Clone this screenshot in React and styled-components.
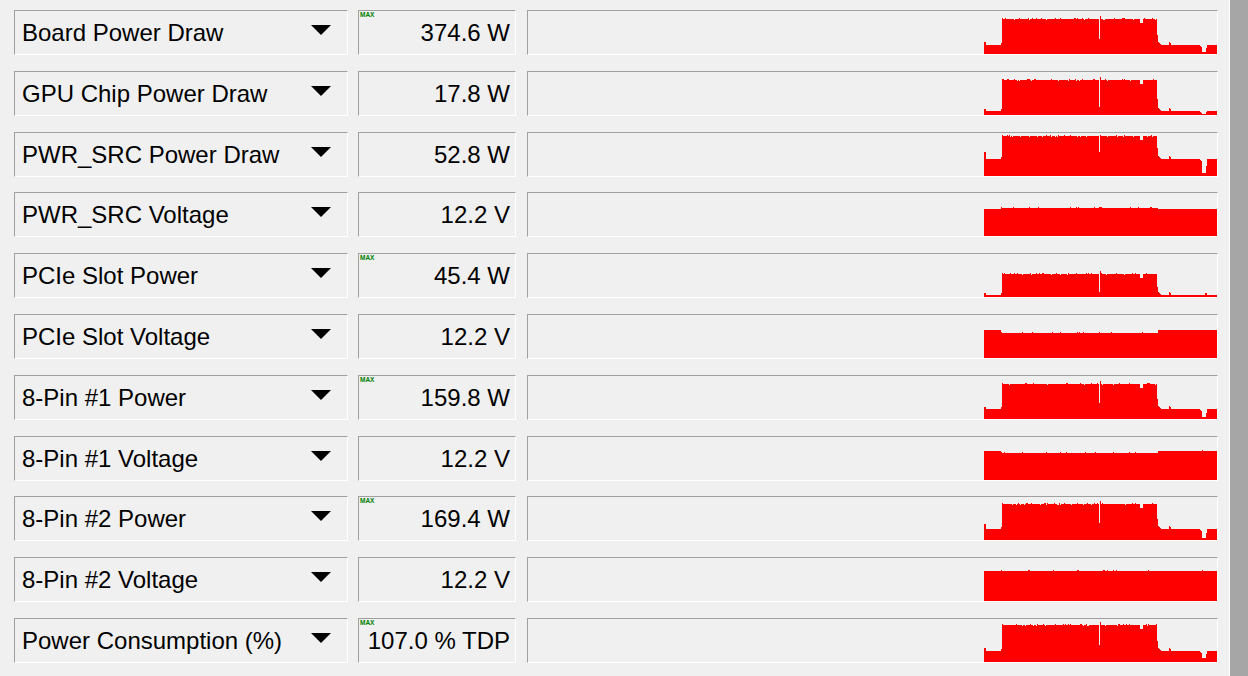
import React from "react"
import styled, { createGlobalStyle } from "styled-components"

const GlobalStyle = createGlobalStyle`
  html, body {
    margin: 0;
    padding: 0;
    background: #f0f0f0;
    overflow: hidden;
  }
  body {
    font-family: "Liberation Sans", Arial, sans-serif;
  }
`

const GRAPH_W = 233
const GRAPH_H = 43

const Window = styled.div`
  display: flex;
  width: 1248px;
  height: 676px;
  background: #f0f0f0;
`

const SensorList = styled.div`
  flex: 1;
  display: flex;
  flex-direction: column;
  gap: 15.8px;
  padding: 10px 11px 0 14px;
`

const SensorRow = styled.div`
  display: flex;
  height: 45px;
`

const Sunken = styled.div`
  box-sizing: border-box;
  height: 45px;
  background: #f0f0f0;
  border-top: 1px solid #a0a0a0;
  border-left: 1px solid #a0a0a0;
  border-right: 1px solid #ffffff;
  border-bottom: 1px solid #ffffff;
`

const Combo = styled(Sunken)`
  width: 334px;
  display: flex;
  align-items: center;
  padding: 1px 0 0 7px;
  font-size: 24px;
  color: #000;
  white-space: nowrap;
`

const Arrow = styled.span`
  align-self: flex-start;
  margin: 13px 16px 0 auto;
  width: 0;
  height: 0;
  border-left: 10px solid transparent;
  border-right: 10px solid transparent;
  border-top: 10px solid #000;
`

const ValueBox = styled(Sunken)`
  position: relative;
  width: 158px;
  margin-left: 10px;
  display: flex;
  align-items: center;
  justify-content: flex-end;
  padding: 1px 5px 0 0;
  font-size: 24px;
  color: #000;
  white-space: nowrap;
`

const MaxTag = styled.span`
  position: absolute;
  top: 1px;
  left: 1px;
  font-size: 6.5px;
  font-weight: bold;
  line-height: 1;
  color: #008000;
`

const GraphBox = styled(Sunken)`
  flex: 1;
  margin-left: 11px;
  display: flex;
  justify-content: flex-end;
  align-items: flex-end;
`

const Plot = styled.svg`
  display: block;
`

const Scrollbar = styled.div`
  width: 18px;
  height: 100%;
  border-left: 1px solid #ffffff;
  background: #a6a6a6;
`

function rng(seed) {
  let s = seed
  return () => {
    s = (s * 16807) % 2147483647
    return s / 2147483647
  }
}

function powerSeries({ seed, start, low, high, peak, gap, dip, fall, noDip, bump }) {
  const r = rng(seed)
  const out = []
  const f = fall ?? Math.round(low + (high - low) * 0.4)
  for (let x = 0; x < GRAPH_W; x++) {
    let h
    if (x < 2) h = start
    else if (x < 17) h = low
    else if (x === 17) h = low + 2
    else if (x < 173) {
      h = high
      const n = r()
      if (n < 0.12) h = high + 1
      else if (n < 0.2) h = high - 1
      if (x === 115) h = gap
      if (x === 116) h = peak
      if (x >= 156 && x < 159) h = high - 4
    } else if (x === 173) h = f
    else if (x < 177) h = low + (177 - x)
    else if (x === 185) h = low + 3
    else if (x === 186) h = low + 2
    else if (noDip) h = x === (bump ?? -1) || x === (bump ?? -1) + 1 ? low + 2 : low
    else if (x === 216) h = low - 1
    else if (x === 217) h = low - 2
    else if (x >= 218 && x < 222) h = dip
    else if (x === 222) h = Math.round((dip + low) / 2)
    else h = low
    out.push(h)
  }
  return out
}

function voltSeries({ seed, side, mid, spike }) {
  const r = rng(seed)
  const out = []
  for (let x = 0; x < GRAPH_W; x++) {
    let h = x < 17 || x >= 174 ? side : mid
    if (x >= 17 && x < 174 && r() < 0.07) h = mid + 1
    if (spike && x === 218) h = side + 1
    out.push(h)
  }
  return out
}

const toPath = (data) => {
  let d = `M0 ${GRAPH_H}`
  data.forEach((h, i) => {
    d += ` V${GRAPH_H - h} H${i + 1}`
  })
  return d + ` V${GRAPH_H} Z`
}

const sensors = [
  { name: "Board Power Draw", value: "374.6 W", max: true, data: powerSeries({ seed: 11, start: 12, low: 9, high: 35, peak: 38, gap: 15, dip: 2 }) },
  { name: "GPU Chip Power Draw", value: "17.8 W", data: powerSeries({ seed: 23, start: 6, low: 4, high: 35, peak: 38, gap: 8, dip: 1 }) },
  { name: "PWR_SRC Power Draw", value: "52.8 W", data: powerSeries({ seed: 37, start: 24, low: 17, high: 40, peak: 41, gap: 24, dip: 3, fall: 28 }) },
  { name: "PWR_SRC Voltage", value: "12.2 V", data: voltSeries({ seed: 41, side: 27, mid: 28 }) },
  { name: "PCIe Slot Power", value: "45.4 W", max: true, data: powerSeries({ seed: 53, start: 4, low: 2, high: 23, peak: 26, gap: 5, dip: 2, noDip: true, bump: 221 }) },
  { name: "PCIe Slot Voltage", value: "12.2 V", data: voltSeries({ seed: 67, side: 28, mid: 25 }) },
  { name: "8-Pin #1 Power", value: "159.8 W", max: true, data: powerSeries({ seed: 71, start: 12, low: 10, high: 35, peak: 38, gap: 16, dip: 2 }) },
  { name: "8-Pin #1 Voltage", value: "12.2 V", data: voltSeries({ seed: 83, side: 29, mid: 27, spike: true }) },
  { name: "8-Pin #2 Power", value: "169.4 W", max: true, data: powerSeries({ seed: 97, start: 16, low: 11, high: 36, peak: 39, gap: 17, dip: 2 }) },
  { name: "8-Pin #2 Voltage", value: "12.2 V", data: voltSeries({ seed: 101, side: 30, mid: 30, spike: true }) },
  { name: "Power Consumption (%)", value: "107.0 % TDP", max: true, data: powerSeries({ seed: 113, start: 14, low: 11, high: 37, peak: 40, gap: 17, dip: 4 }) },
]

const Graph = ({ data }) => (
  <GraphBox>
    <Plot width={GRAPH_W} height={GRAPH_H} viewBox={`0 0 ${GRAPH_W} ${GRAPH_H}`} shapeRendering="crispEdges">
      <path d={toPath(data)} fill="#ff0000" />
    </Plot>
  </GraphBox>
)

const App = () => {
  return (
    <>
      <GlobalStyle />
      <Window>
        <SensorList>
          {sensors.map((s) => (
            <SensorRow key={s.name}>
              <Combo>
                {s.name}
                <Arrow />
              </Combo>
              <ValueBox>
                {s.max && <MaxTag>MAX</MaxTag>}
                {s.value}
              </ValueBox>
              <Graph data={s.data} />
            </SensorRow>
          ))}
        </SensorList>
        <Scrollbar />
      </Window>
    </>
  )
}

export default App
